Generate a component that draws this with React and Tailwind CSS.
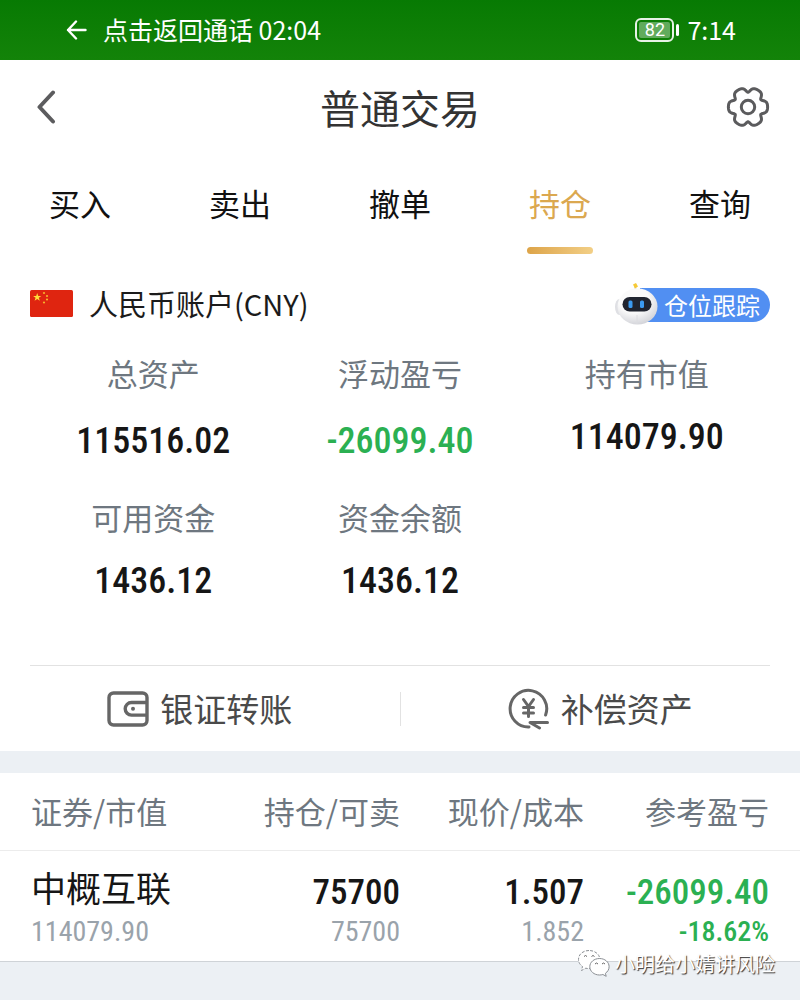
import React from 'react';

const tabs = ['买入', '卖出', '撤单', '持仓', '查询'];

const summary = [
  { label: '总资产', value: '115516.02', gap: 'pt-[18px]' },
  { label: '浮动盈亏', value: '-26099.40', gap: 'pt-[18px]', color: 'text-[#2bb052]' },
  { label: '持有市值', value: '114079.90', gap: 'pt-[14px]' },
  { label: '可用资金', value: '1436.12', gap: 'pt-[14px]' },
  { label: '资金余额', value: '1436.12', gap: 'pt-[14px]' },
];

const positions = [
  {
    name: '中概互联',
    marketValue: '114079.90',
    held: '75700',
    sellable: '75700',
    price: '1.507',
    cost: '1.852',
    profit: '-26099.40',
    percent: '-18.62%',
  },
];

const NUM = "font-['Roboto_Condensed',sans-serif]";

// six wide teeth with narrow notches between them
const gearPoints = Array.from({ length: 180 }, (_, i) => {
  const deg = i * 2;
  const notch = ((deg % 60) - 30) / 11;
  const r = 19.6 - 4.8 * Math.exp(-notch * notch);
  const a = (deg * Math.PI) / 180;
  return `${(22 + r * Math.cos(a)).toFixed(2)},${(22 + r * Math.sin(a)).toFixed(2)}`;
}).join(' ');

const GearIcon = () => (
  <svg width="44" height="44" viewBox="0 0 44 44" fill="none" stroke="#5b5b5d" strokeWidth="3" strokeLinejoin="round">
    <polygon points={gearPoints} />
    <circle cx="22" cy="22" r="6.7" />
  </svg>
);

const WalletIcon = () => (
  <svg width="42" height="36" viewBox="0 0 42 36" fill="none" stroke="#666" strokeWidth="3.4">
    <rect x="2" y="2" width="38" height="32" rx="4.5" />
    <path d="M39 11.5H24.5a6.2 6.2 0 0 0 0 12.6H39" />
    <circle cx="26" cy="17.8" r="2" fill="#666" stroke="none" />
  </svg>
);

const YuanIcon = () => (
  <svg width="42" height="42" viewBox="0 0 42 42" fill="none" stroke="#666" strokeWidth="3" strokeLinecap="round">
    <path d="M21 39A18.3 18.3 0 1 1 37.6 27" />
    <path d="M15.5 11.5l5 7 5-7M20.5 18.5v10M15.5 19.5h10M15.5 25h10" />
    <path d="M39.5 34.5H22l9.5 5.5" strokeLinejoin="round" />
  </svg>
);

const Flag = () => (
  <svg width="43" height="27" viewBox="0 0 43 27">
    <rect width="43" height="27" rx="1.5" fill="#df2510" />
    <path d="M7.2 3l1 2.9h3.1L8.8 7.8l1 3-2.6-1.9-2.6 1.9 1-3-2.5-1.9h3.1z" fill="#ffde3a" />
    <g fill="#f6b32c">
      <circle cx="14" cy="3" r="1.1" />
      <circle cx="17" cy="6" r="1.1" />
      <circle cx="17" cy="9.5" r="1.1" />
      <circle cx="14" cy="12.5" r="1.1" />
    </g>
  </svg>
);

const Robot = () => (
  <svg className="relative z-10" width="46" height="46" viewBox="0 0 46 46">
    <defs>
      <radialGradient id="head" cx="0.4" cy="0.3" r="0.75">
        <stop offset="0.5" stopColor="#fafafa" />
        <stop offset="1" stopColor="#cfd0d6" />
      </radialGradient>
    </defs>
    <path d="M22 10l-1-6" stroke="#dedede" strokeWidth="2" />
    <path d="M19 2.5l3-1.5 2 3.5-3 2z" fill="#f6c935" />
    <ellipse cx="5.5" cy="25" rx="4.5" ry="8" fill="#dfe0e4" />
    <ellipse cx="23.5" cy="24.5" rx="20" ry="18" fill="url(#head)" />
    <path d="M23 33v9" stroke="#dcdce0" />
    <rect x="8.500" y="15" width="29" height="14.500" rx="7.200" fill="#20242f" />
    <rect x="14.500" y="18.500" width="4" height="7.500" rx="1.500" fill="#3b9af0" />
    <rect x="26" y="18.500" width="4" height="7.500" rx="1.500" fill="#3b9af0" />
  </svg>
);

const WechatIcon = () => (
  <svg width="34" height="30" viewBox="0 0 34 30" fill="#fff" stroke="#8b8f94" strokeWidth="1">
    <path d="M12 1.5C5.8 1.5 1.5 5.5 1.5 10.5c0 3 1.6 5.4 4 7l-1 4 4.3-2.3c1.2.3 2.2.4 3.2.4 6.2 0 10.8-4 10.8-9.1S18.2 1.5 12 1.5z" strokeDasharray="3 1.5" />
    <path d="M22.5 9.5c-5.4 0-9.7 3.6-9.7 8.2s4.3 8.3 9.7 8.3c1.2 0 2.3-.2 3.4-.5l3.3 1.8-.8-3c2.2-1.5 3.7-3.8 3.7-6.6 0-4.6-4.2-8.2-9.6-8.2z" />
    <g fill="none" stroke="#666">
      <path d="M7 7.500q1.500-2 3 0M14.500 7.500q1.500-2 3 0M18 15q1.500-2 3 0M25 15q1.500-2 3 0" />
    </g>
  </svg>
);

const StatusBar = () => (
  <div className="flex h-[60px] items-center justify-between bg-linear-to-b from-[#077a03] to-[#138309] pr-16 pl-[66px] text-[25px] text-white">
    <div className="flex items-center gap-4">
      <svg width="21" height="20" viewBox="0 0 21 20" fill="none" stroke="#fff" strokeWidth="2.4" strokeLinecap="round" strokeLinejoin="round">
        <path d="M10 1.5L2 10l8 8.500M2 10h17.500" />
      </svg>
      <span>点击返回通话 02:04</span>
    </div>
    <div className="flex items-center gap-2">
      <div className="flex items-center gap-[2px]">
        <div className="flex h-6 w-[39px] rounded-[6px] border-2 border-white/90 p-[2px]">
          <span className="flex flex-1 items-center justify-center rounded-[2px] bg-white/35 font-['Roboto',sans-serif] text-[18px] leading-none">82</span>
        </div>
        <div className="h-3 w-[3px] rounded-sm bg-white" />
      </div>
      <span>7:14</span>
    </div>
  </div>
);

const Header = () => (
  <header className="flex h-[94px] items-center justify-between px-[30px]">
    <button aria-label="返回" className="w-11 pl-[6px]">
      <svg width="22" height="34" viewBox="0 0 22 34" fill="none" stroke="#5c5c5e" strokeWidth="4" strokeLinecap="round" strokeLinejoin="round">
        <path d="M17 2.500L3.500 17 17 31.500" />
      </svg>
    </button>
    <h1 className="text-[40px] text-[#333]">普通交易</h1>
    <button aria-label="设置"><GearIcon /></button>
  </header>
);

const Tabs = () => (
  <nav className="grid h-[100px] grid-cols-5 pt-[23px]">
    {tabs.map((tab) => (
      <button
        key={tab}
        className={`flex flex-col items-center justify-between text-[31px] ${tab === '持仓' ? 'text-[#dba850]' : 'text-[#111]'}`}
      >
        <span className="leading-[52px]">{tab}</span>
        {tab === '持仓' && <span className="h-[7px] w-[66px] rounded-full bg-linear-to-r from-[#dda448] to-[#f2cf86]" />}
      </button>
    ))}
  </nav>
);

const Action = ({ icon, children }) => (
  <button className="flex items-center justify-center gap-[11px] text-[33px] text-[#4a4a4a]">
    {icon}
    {children}
  </button>
);

const Cell = ({ top, bottom, className = '', topClass = 'pt-[6px]', bottomClass = 'font-normal text-[#9aa3ab]' }) => (
  <td className={`pt-1 ${className}`}>
    <div className={`leading-[42px] ${topClass}`}>{top}</div>
    <div className={`text-[28px] leading-[36px] ${bottomClass}`}>{bottom}</div>
  </td>
);

const App = () => {
  return (
    <div className="min-h-screen bg-[#ecf0f4] font-['Noto_Sans_CJK_SC',sans-serif]">
      <StatusBar />
      <main>
        <section className="bg-white">
          <Header />
          <Tabs />

          <div className="flex items-center justify-between px-[30px] pt-6">
            <div className="flex items-center gap-4 text-[29px] leading-[50px] text-[#1b1b1b]">
              <Flag />
              <span>人民币账户(CNY)</span>
            </div>
            <button className="flex items-center pt-1">
              <Robot />
              <span className="-ml-5 flex h-[34px] items-center rounded-r-full bg-[#518ff2] pr-[10px] pl-6 text-[24px] text-white">仓位跟踪</span>
            </button>
          </div>

          <dl className="grid grid-cols-3 px-[30px] pt-[19px] pb-[30px] text-center">
            {summary.map((item) => (
              <div key={item.label} className="h-36">
                <dt className="text-[31px] leading-[52px] text-[#6e7780]">{item.label}</dt>
                <dd className={`${NUM} ${item.gap} text-[36px] leading-[48px] font-medium ${item.color || 'text-[#161616]'}`}>{item.value}</dd>
              </div>
            ))}
          </dl>

          <div className="mx-[30px] border-t border-[#e2e2e2]" />
          <div className="grid h-[85px] grid-cols-[1fr_1px_1fr] items-center">
            <Action icon={<WalletIcon />}>银证转账</Action>
            <div className="h-[34px] bg-[#e2e2e2]" />
            <Action icon={<YuanIcon />}>补偿资产</Action>
          </div>
        </section>

        <section className="mt-[22px] border-b border-[#cfd3d7] bg-white">
          <table className="w-full table-fixed text-right">
            <colgroup>
              <col className="w-[27%]" />
              <col className="w-[23%]" />
              <col className="w-[23%]" />
              <col className="w-[27%]" />
            </colgroup>
            <thead>
              <tr className="h-[77px] border-b border-[#ececec] text-[31px] text-[#6e7780]">
                <th className="pl-[31px] text-left font-normal">证券/市值</th>
                <th className="font-normal">持仓/可卖</th>
                <th className="font-normal">现价/成本</th>
                <th className="pr-[31px] font-normal">参考盈亏</th>
              </tr>
            </thead>
            <tbody className={`${NUM} text-[35px] font-medium text-[#161616]`}>
              {positions.map((p) => (
                <tr key={p.name} className="h-[111px]">
                  <Cell
                    top={p.name}
                    bottom={p.marketValue}
                    className="pl-[31px] text-left"
                    topClass="pb-[6px] font-['Noto_Sans_CJK_SC',sans-serif] font-normal"
                  />
                  <Cell top={p.held} bottom={p.sellable} />
                  <Cell top={p.price} bottom={p.cost} />
                  <Cell top={p.profit} bottom={p.percent} className="pr-[31px] text-[#2bb052]" bottomClass="" />
                </tr>
              ))}
            </tbody>
          </table>
        </section>
      </main>
      <footer className="relative">
        <div className="absolute -top-[15px] right-[25px] flex items-center gap-1 text-[20px] leading-[34px] text-white [text-shadow:1px_1px_1px_#333]">
          <WechatIcon />
          <span>小明给小婧讲风险</span>
        </div>
      </footer>
    </div>
  );
};

export default App;
